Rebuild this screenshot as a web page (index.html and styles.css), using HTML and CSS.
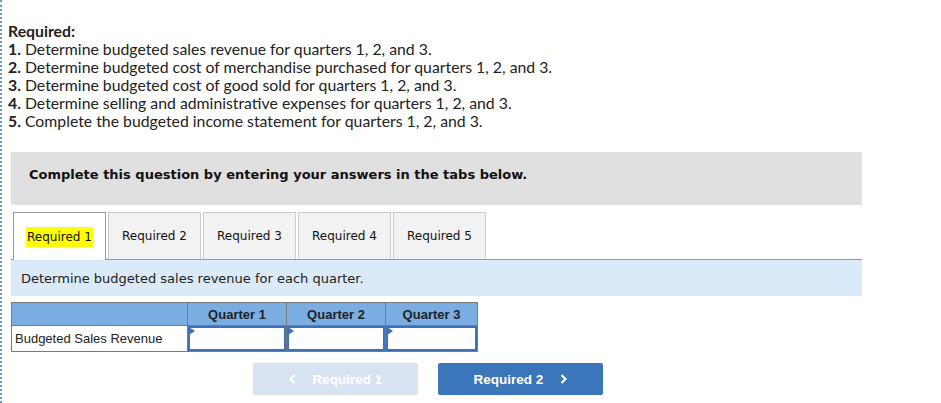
FILE: index.html
```html
<!DOCTYPE html>
<html lang="en">
<head>
<meta charset="utf-8">
<title>Required</title>
<link rel="stylesheet" href="styles.css">
</head>
<body>
<div class="page">
  <div class="intro">
    <div class="req-title">Required:</div>
    <div><b>1.</b> Determine budgeted sales revenue for quarters 1, 2, and 3.</div>
    <div><b>2.</b> Determine budgeted cost of merchandise purchased for quarters 1, 2, and 3.</div>
    <div><b>3.</b> Determine budgeted cost of good sold for quarters 1, 2, and 3.</div>
    <div><b>4.</b> Determine selling and administrative expenses for quarters 1, 2, and 3.</div>
    <div><b>5.</b> Complete the budgeted income statement for quarters 1, 2, and 3.</div>
  </div>
  <div class="work">
    <div class="banner">Complete this question by entering your answers in the tabs below.</div>
    <div class="tabs">
      <div class="tab active"><span class="hl">Required 1</span></div>
      <div class="tab">Required 2</div>
      <div class="tab">Required 3</div>
      <div class="tab">Required 4</div>
      <div class="tab">Required 5</div>
    </div>
    <div class="instr">Determine budgeted sales revenue for each quarter.</div>
    <table class="grid">
      <tr class="head">
        <th class="lbl"></th>
        <th class="q">Quarter 1</th>
        <th class="q">Quarter 2</th>
        <th class="q q3">Quarter 3</th>
      </tr>
      <tr>
        <td class="lbl">Budgeted Sales Revenue</td>
        <td class="cell"><div class="inp"></div></td>
        <td class="cell"><div class="inp"></div></td>
        <td class="cell"><div class="inp"></div></td>
      </tr>
    </table>
    <div class="nav">
      <div class="btn disabled"><svg class="chev" width="7" height="10" viewBox="0 0 7 10"><polyline points="5.5,1 1.5,5 5.5,9" fill="none" stroke="#fff" stroke-width="2.2"/></svg>Required 1</div>
      <div class="btn primary">Required 2<svg class="chev r" width="7" height="10" viewBox="0 0 7 10"><polyline points="1.5,1 5.5,5 1.5,9" fill="none" stroke="#fff" stroke-width="2.2"/></svg></div>
    </div>
  </div>
</div>
</body>
</html>
```
FILE: styles.css
```css
html, body {
  margin: 0;
  padding: 0;
  background: #fff;
}
.page {
  border-left: 2px dotted #6a9ad6;
  min-height: 403px;
  box-sizing: border-box;
  padding: 22px 0 0 6px;
  width: 941px;
}
.intro {
  font-family: "Lato", "Open Sans", sans-serif;
  font-size: 15.8px;
  line-height: 18px;
  color: #222;
}
.intro b, .req-title {
  font-weight: 700;
}
.work {
  margin-left: 3px;
  width: 851px;
}
.banner {
  margin-top: 22px;
  height: 53px;
  background: #e0e0e0;
  box-sizing: border-box;
  padding: 0 0 8px 18px;
  display: flex;
  align-items: center;
  font-family: "DejaVu Sans", Verdana, sans-serif;
  font-weight: 700;
  font-size: 13px;
  color: #111;
}
.tabs {
  margin-top: 7px;
  display: flex;
  gap: 2px;
  padding-left: 2px;
  height: 47px;
  border-bottom: 1px solid #999;
}
.tab {
  width: 93px;
  box-sizing: border-box;
  border: 1px solid #ccc;
  border-bottom: none;
  background: #f2f2f2;
  display: flex;
  align-items: center;
  justify-content: center;
  font-family: "DejaVu Sans", Verdana, sans-serif;
  font-size: 12px;
  color: #111;
}
.tab.active {
  background: #fff;
  border-color: #999;
  height: 48px;
  margin-bottom: -1px;
}
.hl {
  background: #ffff00;
  padding: 3px 1px;
}
.instr {
  height: 36px;
  background: #daeaf8;
  display: flex;
  align-items: center;
  padding-left: 10px;
  font-family: "DejaVu Sans", Verdana, sans-serif;
  font-size: 13px;
  color: #222;
}
.grid {
  margin-top: 6px;
  border-collapse: collapse;
  font-family: "Liberation Sans", Arial, sans-serif;
  font-size: 13px;
  color: #222;
}
.grid th, .grid td {
  border: 1px solid #7a7a7a;
  padding: 0;
}
.head th {
  background: #7aaee3;
  height: 22px;
  font-size: 13px;
  font-weight: 700;
  text-align: center;
}
th.lbl {
  width: 175px;
}
td.lbl {
  width: 172px;
  height: 25px;
  padding-left: 3px;
  text-align: left;
}
th.q {
  width: 98px;
}
th.q3 {
  width: 91px;
}
.cell {
  position: relative;
  height: 25px;
}
.inp {
  position: absolute;
  inset: 0;
  border: 2px solid #3f72b5;
  background: #fff;
}
.inp::before {
  content: "";
  position: absolute;
  left: -1px;
  top: -1px;
  border-left: 6px solid #3f72b5;
  border-top: 4px solid transparent;
  border-bottom: 4px solid transparent;
}
.nav {
  margin-top: 11px;
  display: flex;
  gap: 20px;
  padding-left: 242px;
}
.btn {
  width: 165px;
  height: 32px;
  border-radius: 2px;
  display: flex;
  align-items: center;
  justify-content: center;
  font-family: "Liberation Sans", Arial, sans-serif;
  font-weight: 700;
  font-size: 13.5px;
  color: #fff;
}
.btn.disabled {
  background: #d8e3f1;
}
.btn.primary {
  background: #3a76b9;
}
.chev {
  margin-right: 17px;
}
.chev.r {
  margin: 0 0 0 17px;
}
```
